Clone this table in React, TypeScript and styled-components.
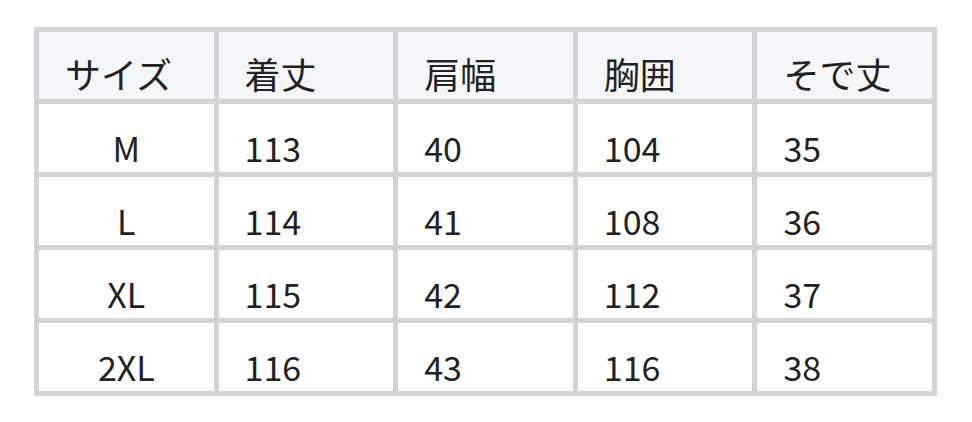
import React from "react";
import styled, { createGlobalStyle } from "styled-components";

const GlobalStyle = createGlobalStyle`
  body {
    margin: 0;
    background: #ffffff;
    font-family: "Noto Sans CJK JP", "Noto Sans", sans-serif;
  }
`;

const Page = styled.div`
  padding: 27px 0 0 34px;
`;

const Table = styled.div`
  display: grid;
  grid-template-columns: repeat(5, 1fr);
  grid-template-rows: 67px repeat(4, 68px);
  gap: 5px;
  padding: 5px;
  width: 893px;
  background-color: #d3d3d3;
`;

const HeadCell = styled.div`
  background-color: #f5f6fa;
  color: #222222;
  font-size: 36px;
  line-height: 50px;
  padding: 16px 0 0 26px;
  white-space: nowrap;
  overflow: hidden;
`;

const Cell = styled.div<{ $center?: boolean }>`
  background-color: #ffffff;
  color: #222222;
  font-size: 34px;
  line-height: 49px;
  padding: ${(props) => (props.$center ? "19px 0 0 0" : "19px 0 0 26px")};
  text-align: ${(props) => (props.$center ? "center" : "left")};
  white-space: nowrap;
`;

const headers = ["サイズ", "着丈", "肩幅", "胸囲", "そで丈"];

const rows = [
  ["M", "113", "40", "104", "35"],
  ["L", "114", "41", "108", "36"],
  ["XL", "115", "42", "112", "37"],
  ["2XL", "116", "43", "116", "38"],
];

function App() {
  return (
    <Page>
      <GlobalStyle />
      <Table>
        {headers.map((h) => (
          <HeadCell key={h}>{h}</HeadCell>
        ))}
        {rows.map((row) =>
          row.map((value, i) => (
            <Cell key={row[0] + i} $center={i === 0}>
              {value}
            </Cell>
          ))
        )}
      </Table>
    </Page>
  );
}

export default App;
